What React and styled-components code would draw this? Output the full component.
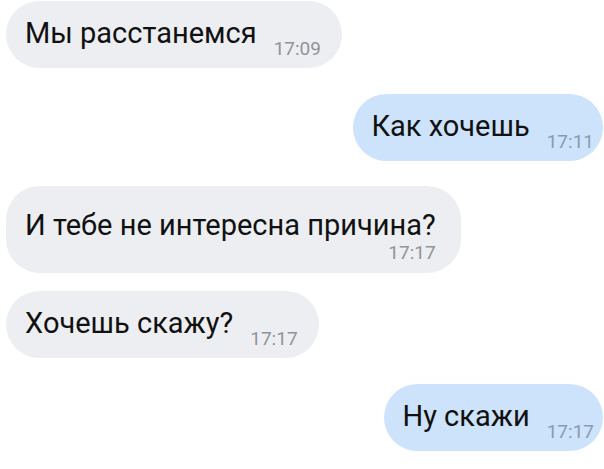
import React from "react";
import styled, { createGlobalStyle } from "styled-components";

const Global = createGlobalStyle`
  html, body { margin: 0; padding: 0; background: #ffffff; }
  body { font-family: Roboto, "Noto Sans", "Liberation Sans", sans-serif; -webkit-font-smoothing: antialiased; }
`;

const Chat = styled.div`
  width: 604px;
  height: 469px;
  box-sizing: border-box;
  padding: 1px 1px 0 6px;
  display: flex;
  flex-direction: column;
  overflow: hidden;
`;

const Row = styled.div`
  display: flex;
  justify-content: ${(p) => (p.$out ? "flex-end" : "flex-start")};
  margin-top: ${(p) => p.$gap || 0}px;
`;

const Bubble = styled.div`
  display: flex;
  flex-direction: ${(p) => (p.$stack ? "column" : "row")};
  align-items: flex-end;
  gap: ${(p) => (p.$stack ? "0" : "17px")};
  background: ${(p) => (p.$out ? "#cce3fb" : "#eceef1")};
  border-radius: 34px;
  padding: ${(p) =>
    p.$stack ? "23px 25px 9px 19px" : p.$out ? "16px 9px 8px 18px" : "16px 21px 8px 19px"};
`;

const Text = styled.span`
  font-size: 29px;
  line-height: 33px;
  color: #111111;
  white-space: nowrap;
  margin-bottom: ${(p) => (p.$stack ? "0" : "10px")};
  align-self: ${(p) => (p.$stack ? "flex-start" : "auto")};
`;

const Time = styled.span`
  font-size: 19px;
  line-height: 22px;
  color: ${(p) => (p.$out ? "#8a9bb0" : "#909499")};
  white-space: nowrap;
`;

const messages = [
  { text: "Мы расстанемся", time: "17:09", out: false, gap: 0 },
  { text: "Как хочешь", time: "17:11", out: true, gap: 26 },
  { text: "И тебе не интересна причина?", time: "17:17", out: false, gap: 25, stack: true },
  { text: "Хочешь скажу?", time: "17:17", out: false, gap: 18 },
  { text: "Ну скажи", time: "17:17", out: true, gap: 26 },
];

export default function App() {
  return (
    <>
      <Global />
      <Chat>
        {messages.map((m, i) => (
          <Row key={i} $out={m.out} $gap={m.gap}>
            <Bubble $out={m.out} $stack={m.stack}>
              <Text $stack={m.stack}>{m.text}</Text>
              <Time $out={m.out}>{m.time}</Time>
            </Bubble>
          </Row>
        ))}
      </Chat>
    </>
  );
}
